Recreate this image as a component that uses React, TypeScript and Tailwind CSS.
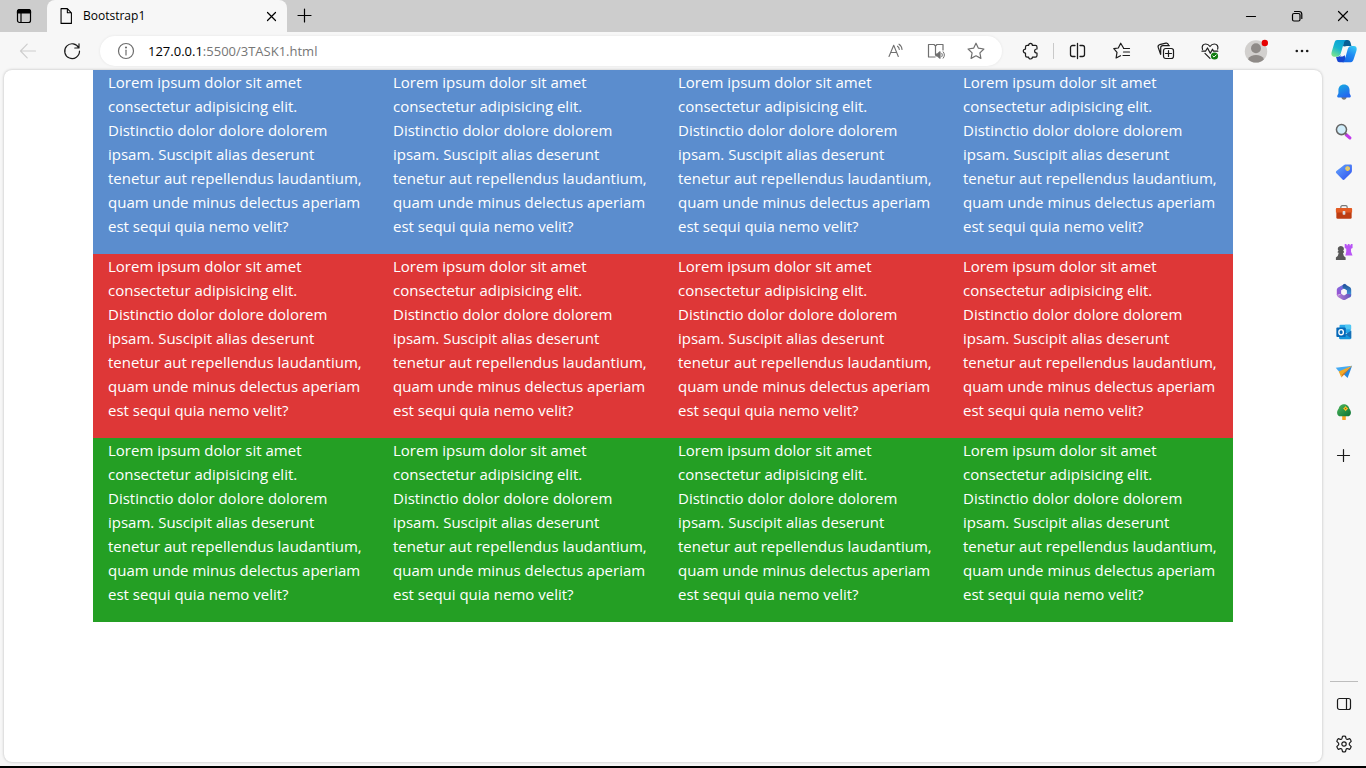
import type { ReactNode } from "react";

const LOREM =
  "Lorem ipsum dolor sit amet consectetur adipisicing elit. Distinctio dolor dolore dolorem ipsam. Suscipit alias deserunt tenetur aut repellendus laudantium, quam unde minus delectus aperiam est sequi quia nemo velit?";

const STRIPES = [
  { id: "blue", className: "bg-[#5b8dce]" },
  { id: "red", className: "bg-[#de3737]" },
  { id: "green", className: "bg-[#249f24]" },
];

/* Line icon on a 20-unit grid */
function Line({ children, className = "size-5" }: { children: ReactNode; className?: string }) {
  return (
    <svg
      viewBox="0 0 20 20"
      className={className}
      fill="none"
      stroke="currentColor"
      strokeWidth="1.2"
      strokeLinecap="round"
      strokeLinejoin="round"
      aria-hidden="true"
    >
      {children}
    </svg>
  );
}

function IconButton({ label, className, children }: { label: string; className: string; children: ReactNode }) {
  return (
    <button type="button" aria-label={label} className={`flex shrink-0 items-center justify-center ${className}`}>
      {children}
    </button>
  );
}

function TitleBar() {
  return (
    <header className="flex h-8 shrink-0 bg-[#cdcdcd] text-black">
      <IconButton label="Tab actions" className="w-[47px]">
        <Line>
          <rect x="3.5" y="3.5" width="13" height="13" rx="2" />
          <path d="M3.5 7V5.5a2 2 0 0 1 2-2h9a2 2 0 0 1 2 2V7z" fill="currentColor" />
          <path d="M7 7v9.5" />
        </Line>
      </IconButton>
      <div className="flex w-60 items-center rounded-t-lg bg-[#f7f7f7] pl-2.5 pr-1.5">
        <Line className="size-[18px]">
          <path d="M4.5 1.8h7l4.500 4.600v11.800H4.500z M11.500 1.800v4.600H16" />
        </Line>
        <span className="ml-2 flex-1 text-[12px] leading-4">Bootstrap1</span>
        <IconButton label="Close tab" className="size-5">
          <Line>
            <path d="M6.5 6.500l8 8M14.500 6.500l-8 8" />
          </Line>
        </IconButton>
      </div>
      <IconButton label="New tab" className="w-9">
        <Line>
          <path d="M9.500 3v13M3 9.500h13" />
        </Line>
      </IconButton>
      <div className="ml-auto flex">
        <IconButton label="Minimize" className="w-[46px]">
          <Line>
            <path d="M5.500 10.500h9" />
          </Line>
        </IconButton>
        <IconButton label="Restore" className="w-[46px]">
          <Line>
            <rect x="5.500" y="7.500" width="7.500" height="7.500" rx="1.500" />
            <path d="M7.500 5.500H12a2.800 2.800 0 0 1 2.800 2.800v4.200" />
          </Line>
        </IconButton>
        <IconButton label="Close window" className="w-[46px]">
          <Line>
            <path d="M5.500 5.500l9 9M14.500 5.500l-9 9" />
          </Line>
        </IconButton>
      </div>
    </header>
  );
}

function Copilot() {
  return (
    <svg viewBox="0 0 26 24" className="h-6 w-[26px]" aria-hidden="true">
      <defs>
        <linearGradient id="cpA" x1="0.7" y1="0" x2="0.2" y2="1">
          <stop offset="0" stopColor="#0a9fd6" />
          <stop offset="0.5" stopColor="#17b6cf" />
          <stop offset="1" stopColor="#7be58c" />
        </linearGradient>
        <linearGradient id="cpB" x1="0.8" y1="0" x2="0.3" y2="1">
          <stop offset="0" stopColor="#36c8f4" />
          <stop offset="0.5" stopColor="#218bf3" />
          <stop offset="1" stopColor="#1769e8" />
        </linearGradient>
      </defs>
      <path d="M12.500 1h4c2 0 2.600 1.100 3.100 2.800L20.400 7h-4.200c-1 0-1.700.3-2.200 1L12 7z" fill="#075f94" />
      <path d="M8.500 23.200H13l2-3-1.500-4-3.500-.5c-.8 1.300-1.800 2-3.500 2H5l.9 3c.5 1.700 1.200 2.500 2.600 2.500z" fill="#1746d0" />
      <path d="M6.300 1h9.200c-1.700.3-2.300 1.600-2.800 3.400L9.900 14.100c-.8 2.600-2.100 3.600-4 3.600H3.200C.4 17.700-.1 15.500.8 12.400l2.400-8C3.900 2.200 4.600 1 6.300 1z" fill="url(#cpA)" />
      <path d="M19.700 23.200h-8.500c1.700-.3 2.300-1.500 2.800-3.200l2.600-9.400c.7-2.500 1.900-3.600 3.800-3.600h2.400c2.800 0 3.400 2.200 2.500 5.200l-2.500 7.600c-.7 2.200-1.400 3.400-3.100 3.400z" fill="url(#cpB)" />
      <path d="M13.600 7.500h3.200c-1 .7-1.500 1.700-1.900 3l-1.500 5.300c-.3 1-.9 1.600-1.900 1.600H8.700c.9-.7 1.300-1.700 1.700-3l1.500-5c.3-1.100.8-1.900 1.700-1.900z" fill="#f7f7f7" />
    </svg>
  );
}

function Toolbar() {
  return (
    <nav aria-label="Browser toolbar" className="flex h-[37px] shrink-0 items-center text-[#1b1b1b]">
      <button type="button" aria-label="Back" disabled className="flex w-14 items-center justify-center text-[#cecece]">
        <Line>
          <path d="M17.500 10h-15M9.200 3.200L2.500 10l6.700 6.800" />
        </Line>
      </button>
      <IconButton label="Refresh" className="w-8">
        <Line>
          <path d="M16.800 7A7.400 7.400 0 1 0 17.500 10M17 2.800V7h-4.200" />
        </Line>
      </IconButton>
      <div className="ml-3 flex h-[30px] min-w-0 flex-1 items-center rounded-full bg-white px-4 shadow-[0_0_3px_rgba(0,0,0,0.08)]">
        <Line className="size-5 shrink-0 text-[#6d6d6d]">
          <circle cx="10" cy="10" r="7.500" />
          <path d="M10 9.200V14" />
          <circle cx="10" cy="6.500" r="0.500" fill="currentColor" />
        </Line>
        <a href="#page" className="ml-3 min-w-0 flex-1 truncate text-[13px] leading-5 text-[#767676]">
          <span className="text-black">127.0.0.1</span>:5500/3TASK1.html
        </a>
        <div className="flex gap-5 text-[#707070]">
          <IconButton label="Read aloud" className="size-5">
            <Line>
              <path d="M3 15.500L7.700 4.200l4.600 11.300M4.700 11.500h6M11.500 5.200c1.200.8 1.700 1.800 1.800 3.300M13 3.200c2 1.300 2.900 3 3 5.300" strokeWidth="1.1" />
            </Line>
          </IconButton>
          <IconButton label="Immersive reader" className="size-5">
            <Line>
              <path d="M9 16H2.500V3.500H8L9.500 5 11 3.500h6V9M9.500 5v9" />
              <path d="M10 13h1.500l2.500-2.200v6.400L11.500 15H10z" fill="currentColor" />
              <path d="M15.700 12.200c.8.900.8 2.700 0 3.600M17.200 10.800c1.600 1.800 1.600 4.600 0 6.400" strokeWidth="1" />
            </Line>
          </IconButton>
          <IconButton label="Add to favorites" className="size-5">
            <Line>
              <path d="M10 2.200l2.400 5 5.500.8-4 3.900 1 5.500L10 14.800l-4.900 2.600 1-5.500L2.100 8l5.500-.8z" />
            </Line>
          </IconButton>
        </div>
      </div>
      <div className="ml-1.5 flex items-center">
        <IconButton label="Extensions" className="w-[45px]">
          <Line>
            <path d="M4.500 6c0-1 .6-1.600 1.600-1.600h1.500C7.600 3 8.400 2.300 9.500 2.300s1.900.7 1.900 2.100h3c1 0 1.600.6 1.600 1.600v2c-1.600 0-2.400.8-2.400 2s.8 2 2.400 2v2.500c0 1-.6 1.600-1.600 1.600h-3c0 1.200-.8 1.900-1.900 1.900s-1.900-.7-1.900-1.900H6.100c-1 0-1.600-.6-1.600-1.600v-2.400c-1.400 0-2.200-.8-2.200-2s.8-2 2.200-2z" />
          </Line>
        </IconButton>
        <span className="h-4 w-px bg-[#c9c9c9]" />
        <IconButton label="Split screen" className="w-12">
          <Line>
            <path d="M9.500 2.500v15M7 4.500H4.500a2 2 0 0 0-2 2v7a2 2 0 0 0 2 2H7M12 4.500h2.500a2 2 0 0 1 2 2v7a2 2 0 0 1-2 2H12" strokeWidth="1.300" />
          </Line>
        </IconButton>
        <IconButton label="Favorites" className="w-10">
          <Line>
            <path d="M11.500 7L8.700 2.200 6.300 7l-4.500.7L5 11.400l-.9 5.600L8.500 14.700M11.500 7.500h6M11.500 11h6M11 14.500h6.500" />
          </Line>
        </IconButton>
        <IconButton label="Collections" className="w-12">
          <Line>
            <rect x="7.500" y="7.500" width="10" height="10" rx="2.200" />
            <path d="M12.500 9.500v6M9.500 12.500h6M4.600 13.300L2.200 6.200a2 2 0 0 1 1.300-2.500l6.400-1.500a2 2 0 0 1 2.300 1.100l.4 1.200M4.700 13.300V6.800a2.100 2.100 0 0 1 2.100-2.100h6.500" />
          </Line>
        </IconButton>
        <IconButton label="Browser essentials" className="w-10">
          <Line>
            <path d="M2.500 8.400C1.400 5 3.200 3 5.700 3c1.900 0 3.200.9 4.300 2.500C11.100 3.900 12.400 3 14.300 3c2.500 0 4.300 2 3.400 5.200M2 10.200h3.500l2-3.200 2.800 5.200 2.200-4 1 2h4.300M5 12.300l5 5" />
            <circle cx="14.500" cy="15" r="3.600" fill="#107c10" stroke="none" />
            <path d="M12.900 15l1.100 1.100 2.200-2.200" stroke="#fff" strokeWidth="1" />
          </Line>
        </IconButton>
        <IconButton label="Profile" className="w-[52px]">
          <svg viewBox="0 0 24 24" className="size-6" aria-hidden="true">
            <circle cx="12" cy="12.500" r="11.200" fill="#d2d0ce" />
            <circle cx="12" cy="9.300" r="5" fill="#8f8b88" />
            <path d="M4 20.200c1.400-3 4.500-4.200 8-4.200s6.600 1.200 8 4.200a11.200 11.200 0 0 1-16 0z" fill="#8f8b88" />
            <circle cx="20.800" cy="4" r="3.200" fill="#e60000" />
          </svg>
        </IconButton>
        <IconButton label="Settings and more" className="w-10">
          <svg viewBox="0 0 20 20" className="size-5" fill="currentColor" aria-hidden="true">
            <circle cx="4.800" cy="10" r="1.300" />
            <circle cx="10" cy="10" r="1.300" />
            <circle cx="15.200" cy="10" r="1.300" />
          </svg>
        </IconButton>
        <IconButton label="Copilot" className="w-11">
          <Copilot />
        </IconButton>
      </div>
    </nav>
  );
}

const SIDEBAR_APPS: { label: string; art: ReactNode }[] = [
  {
    label: "Notifications",
    art: (
      <>
        <defs>
          <linearGradient id="bell" x1="0" y1="0" x2="0.5" y2="1">
            <stop offset="0" stopColor="#16aee0" />
            <stop offset="1" stopColor="#2467ef" />
          </linearGradient>
        </defs>
        <path d="M7 15.500h6c-.4 2-1.400 3-3 3s-2.600-1-3-3z" fill="#777" />
        <path d="M10 1.800c-3.800 0-6.200 2.700-6.200 6.200v3.300l-1.300 3c-.3.900.1 1.700 1 1.700h13c.9 0 1.300-.8 1-1.700l-1.300-3V8c0-3.500-2.400-6.200-6.200-6.200z" fill="url(#bell)" />
      </>
    ),
  },
  {
    label: "Search",
    art: (
      <>
        <path d="M12.500 13l4 3.500" stroke="#c239ec" strokeWidth="3.600" strokeLinecap="round" />
        <path d="M10.800 11l2 1.800" stroke="#777" strokeWidth="2" />
        <circle cx="7.200" cy="7.300" r="5.600" fill="#d0edfa" stroke="#666" strokeWidth="1.700" />
      </>
    ),
  },
  {
    label: "Shopping",
    art: (
      <>
        <defs>
          <linearGradient id="tag" x1="0" y1="0" x2="1" y2="1">
            <stop offset="0" stopColor="#65a6fb" />
            <stop offset="1" stopColor="#2f50f0" />
          </linearGradient>
        </defs>
        <path d="M9.800 2.400c.5-.5 1-.7 1.700-.7h5.800c.9 0 1.500.6 1.500 1.500V9c0 .7-.2 1.200-.7 1.700l-7.300 7.400c-.9.9-1.900.9-2.700 0l-6.500-6.600c-.8-.8-.8-1.700 0-2.500z" fill="url(#tag)" />
        <circle cx="14" cy="6.200" r="2" fill="#c8c2a0" stroke="#ffd542" strokeWidth="1.300" />
      </>
    ),
  },
  {
    label: "Tools",
    art: (
      <>
        <path d="M6.500 6V4.500c0-.9.600-1.500 1.500-1.500h4c.9 0 1.500.6 1.500 1.500V6" fill="none" stroke="#777" strokeWidth="1.300" />
        <rect x="1.500" y="5.500" width="17" height="12" rx="1.500" fill="#bd3d12" />
        <path d="M1 7c0-1 .5-1.500 1.500-1.500h15c1 0 1.500.5 1.500 1.500v3.500H1z" fill="#e35a22" />
        <rect x="8.500" y="9" width="3" height="4" rx="0.700" fill="#dadde1" />
      </>
    ),
  },
  {
    label: "Games",
    art: (
      <>
        <path d="M10.800 1h2v1.500h1.400V1h2v1.500h1.300V1h2v4.500l-1.700 1v3.200l1.700 4.300h-8l1-4.300V6.500l-1.700-1z" fill="#b955f5" />
        <path d="M6.500 3.200A3.300 3.300 0 0 1 9 8.700l1 .8v1.300H8.800l1 3.700 2 1.700v2.600H1v-2.600l2-1.700 1.200-3.700H3V9.500l1-.8a3.300 3.300 0 0 1 2.500-5.500z" fill="#585858" />
      </>
    ),
  },
  {
    label: "Microsoft 365",
    art: (
      <>
        <defs>
          <linearGradient id="officeLeft" x1="1" y1="0" x2="0" y2="1">
            <stop offset="0" stopColor="#5b7fe8" />
            <stop offset="1" stopColor="#a24fd0" />
          </linearGradient>
          <linearGradient id="officeBottom" x1="0" y1="0" x2="1" y2="0">
            <stop offset="0" stopColor="#bb83d8" />
            <stop offset="1" stopColor="#6250bb" />
          </linearGradient>
          <linearGradient id="officeRight" x1="0" y1="0" x2="0" y2="1">
            <stop offset="0" stopColor="#204e91" />
            <stop offset="1" stopColor="#46a8f0" />
          </linearGradient>
        </defs>
        <path d="M10.500 1L4 4.600C2.700 5.300 2 6.300 2 7.800v5.500l5-1V8l5.500-3V1.800C11.800 1 11.200.7 10.500 1z" fill="url(#officeLeft)" />
        <path d="M10.500 1l5.800 3.500c1.200.7 1.700 1.700 1.700 3v5.700c0 1.400-.5 2.300-1.700 3L13 14.300V8L8.500 5.500V3.300c0-1.200.8-2.100 2-2.300z" fill="url(#officeRight)" />
        <path d="M2 12.500c0 1.500.5 2.500 1.700 3.200l4.800 2.800c1 .6 2 .6 3 0l4.800-2.800c1.200-.7 1.700-1.700 1.700-3L13 12l-3 2-3-2-2.500 1.500C3.500 14 2.500 13.600 2 12.500z" fill="url(#officeBottom)" />
        <path d="M10 6.500l3 1.800v3.400l-3 1.800-3-1.800V8.300z" fill="#f7f7f7" />
      </>
    ),
  },
  {
    label: "Outlook",
    art: (
      <>
        <rect x="5" y="2" width="12.500" height="9" rx="1" fill="#28a8e9" />
        <path d="M11.200 2H17c.6 0 1 .4 1 1v4h-6.800z" fill="#50c8f4" />
        <path d="M4.500 9.500l7.500 3 6-4v8.300c0 .7-.5 1.200-1.200 1.200H5.700c-.7 0-1.200-.5-1.200-1.200z" fill="#1596dc" />
        <path d="M12 12.500l6 4.800V8.500z" fill="#176eb5" />
        <rect x="1.500" y="5" width="10.500" height="10.500" rx="1" fill="#0769b8" />
        <ellipse cx="6.800" cy="10.200" rx="2.500" ry="2.800" fill="none" stroke="#fff" strokeWidth="1.500" />
      </>
    ),
  },
  {
    label: "Drop",
    art: (
      <>
        <path d="M.8 5.200L19 3 5.800 11z" fill="#45aaf2" />
        <path d="M19 3l-5 13.800L9 12z" fill="#2588df" />
        <path d="M4.200 9.500L19 3 8 12.500 7 16z" fill="#f4aa24" />
        <path d="M8 12.500L19 3 10 13l-3 3z" fill="#d97b13" />
      </>
    ),
  },
  {
    label: "Tree",
    art: (
      <>
        <defs>
          <linearGradient id="tree" x1="0" y1="0" x2="1" y2="1">
            <stop offset="0" stopColor="#50b75e" />
            <stop offset="1" stopColor="#087232" />
          </linearGradient>
        </defs>
        <path d="M8 13.500h4v4.700c0 .5-.4.800-.9.800H8.900c-.5 0-.9-.3-.9-.8z" fill="#f5a623" />
        <path d="M10 1.500c-3.600 0-5.300 2.500-6 5C3.200 7.700 2.300 8.900 2.300 10.700c0 2.500 1.800 4.100 4.200 4.100h7c2.400 0 4.200-1.600 4.200-4.100 0-1.800-.9-3-1.700-4.200-.7-2.500-2.400-5-6-5z" fill="url(#tree)" />
        <path d="M11.800 3.300l1.300 1.600 1.600 1.300-1.600 1.300-1.300 1.600-1.300-1.600-1.600-1.300 1.600-1.300z" fill="#ffc12b" />
        <circle cx="11.800" cy="6.200" r="0.800" fill="#a56b00" />
      </>
    ),
  },
];

function Sidebar() {
  return (
    <aside aria-label="Sidebar" className="flex w-11 shrink-0 flex-col items-center pb-0.5 pt-[3px] text-[#1b1b1b]">
      {SIDEBAR_APPS.map((app) => (
        <IconButton key={app.label} label={app.label} className="size-10">
          <svg viewBox="0 0 20 20" className="size-[18px]" aria-hidden="true">
            {app.art}
          </svg>
        </IconButton>
      ))}
      <IconButton label="Customize sidebar" className="mt-1 size-10">
        <Line>
          <path d="M9.500 3.500v12M3.500 9.500h12" />
        </Line>
      </IconButton>
      <hr className="mb-0.5 mt-auto w-7 border-t border-[#bdbdbd]" />
      <IconButton label="Hide sidebar" className="size-10">
        <Line>
          <rect x="3.500" y="4.500" width="13" height="11" rx="2" />
          <path d="M12.500 4.500v11" />
        </Line>
      </IconButton>
      <IconButton label="Settings" className="size-10">
        <Line>
          <circle cx="10" cy="10" r="2.200" />
          <path d="M8.500 2.300c1-.3 2-.3 3 0l.5 2.100c.2.700.9 1.100 1.600.9l2.100-.6c.8.800 1.200 1.600 1.500 2.600l-1.500 1.500c-.6.600-.6 1.800 0 2.400l1.500 1.500c-.3 1-.8 1.900-1.500 2.600l-2.100-.6c-.7-.2-1.400.2-1.600.9l-.5 2.100c-1 .3-2 .3-3 0L8 15.600c-.2-.7-.9-1.100-1.600-.9l-2.100.6c-.7-.7-1.200-1.600-1.500-2.600l1.500-1.500c.6-.6.6-1.800 0-2.400L2.800 7.300c.3-1 .8-1.900 1.500-2.600l2.100.6c.7.2 1.400-.2 1.600-.9z" />
        </Line>
      </IconButton>
    </aside>
  );
}

export default function App() {
  return (
    <div className="flex h-screen flex-col border-b-2 border-black bg-[#f7f7f7] font-['Segoe_UI','Open_Sans','Noto_Sans',sans-serif]">
      <TitleBar />
      <Toolbar />
      <div className="flex min-h-0 flex-1">
        <main id="page" className="mb-1 ml-1 mt-px flex-1 overflow-hidden rounded-lg bg-white shadow-[0_0_3px_rgba(0,0,0,0.25)]">
          <div className="mx-auto max-w-[1140px] text-[15px] leading-6 text-white">
            {STRIPES.map((stripe) => (
              <section key={stripe.id} className={`grid grid-cols-4 ${stripe.className}`}>
                {[0, 1, 2, 3].map((column) => (
                  <p key={column} className="mb-4 px-[15px]">
                    {LOREM}
                  </p>
                ))}
              </section>
            ))}
          </div>
        </main>
        <Sidebar />
      </div>
    </div>
  );
}
